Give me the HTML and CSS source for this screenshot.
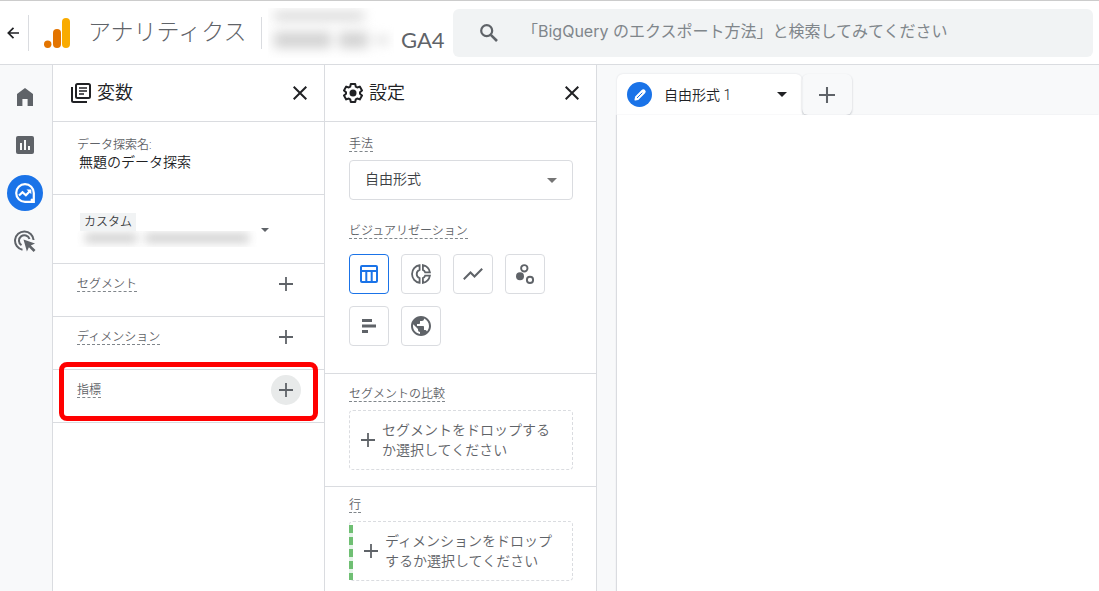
FILE: index.html
```html
<!DOCTYPE html>
<html lang="ja">
<head>
<meta charset="utf-8">
<meta name="viewport" content="width=device-width, initial-scale=1">
<title>アナリティクス</title>
<link rel="stylesheet" href="styles.css">
</head>
<body>
<svg class="defs" aria-hidden="true">
  <symbol id="plus" viewBox="0 0 14 14"><path d="M7 0v14M0 7h14" fill="none" stroke="currentColor" stroke-width="1.8"/></symbol>
  <symbol id="close" viewBox="0 0 14 14"><path d="M.7.7l12.6 12.6M13.3.7L.7 13.3" fill="none" stroke="currentColor" stroke-width="2"/></symbol>
  <symbol id="caret" viewBox="0 0 10 5"><path d="M0 0h10L5 5z" fill="currentColor"/></symbol>
</svg>
<header class="topbar">
  <button class="back" aria-label="戻る"><svg width="12" height="12" viewBox="0 0 12 12"><path d="M12 6H1.5M6.5 .8L1.3 6l5.2 5.2" fill="none" stroke="#202124" stroke-width="1.7"/></svg></button>
  <a class="brand" href="#">
    <svg width="26" height="30" viewBox="0 0 26 30"><circle cx="3.7" cy="26.2" r="3.7" fill="#e37400"/><rect x="9" y="11" width="8" height="19" rx="4" fill="#e37400"/><rect x="18" y="0" width="8" height="30" rx="4" fill="#f9ab00"/></svg>
    <span class="brand-name">アナリティクス</span>
  </a>
  <div class="property">
    <div class="redacted redacted-property" aria-hidden="true">
      <div class="smudge-row"><i class="smudge"></i></div>
      <div class="smudge-row tall"><i class="smudge wide"></i><i class="smudge"></i><i class="smudge dash"></i></div>
    </div>
    <span class="property-name">GA4</span>
  </div>
  <label class="search">
    <svg width="18" height="18" viewBox="0 0 18 18" fill="none" stroke="#5f6368"><circle cx="6.7" cy="6.7" r="5.5" stroke-width="2.2"/><path d="M10.8 10.8l6.2 6.2" stroke-width="2.6"/></svg>
    <input type="search" aria-label="検索" placeholder="「BigQuery のエクスポート方法」と検索してみてください">
  </label>
</header>
<div class="workspace">
  <nav class="rail">
    <a href="#" aria-label="ホーム"><svg width="16" height="18" viewBox="0 0 16 18"><path d="M8 0l8 6v12h-5.400v-7H5.400v7H0V6z" fill="#5f6368"/></svg></a>
    <a href="#" aria-label="レポート"><svg width="18" height="18" viewBox="0 0 18 18"><rect width="18" height="18" rx="2" fill="#5f6368"/><path d="M5 7v7M9 4v10M13 10v4" stroke="#f8f9fa" stroke-width="2"/></svg></a>
    <a href="#" class="current" aria-label="探索"><svg width="20" height="20" viewBox="0 0 20 20" fill="none" stroke="#fff"><path d="M10 1.200a8.800 8.800 0 1 0 0 17.600h8.800V10A8.800 8.800 0 0 0 10 1.200z" stroke-width="2.200"/><path d="M4 12.500l3.500-3.300 3.400 3L15 8" stroke-width="2.200"/><path d="M11.500 6.500h4.800v4.800z" fill="#fff" stroke="none"/><circle cx="17" cy="17" r="1.500" fill="#fff" stroke="none"/></svg></a>
    <a href="#" aria-label="広告"><svg width="22" height="22" viewBox="0 0 22 22" fill="none" stroke="#5f6368" stroke-width="2"><path d="M8.500 19.800A9.300 9.300 0 1 1 19.600 10"/><path d="M7.500 15.200a5.400 5.400 0 1 1 8-6.200"/><path d="M9.500 9.500l11.500 4-4.200 2 4.700 4.600-1.900 1.900-4.700-4.700-2 4.200z" fill="#5f6368" stroke="none"/></svg></a>
  </nav>
  <section class="panel" aria-labelledby="vars">
    <div class="panel-head">
      <svg width="20" height="20" viewBox="0 0 20 20" fill="none" stroke="#202124" stroke-width="2"><rect x="5" y="1" width="14" height="14" rx="1.500"/><path d="M1 4v13.500a1.500 1.500 0 0 0 1.500 1.500H16"/><path d="M8 5h8M8 8h8M8 11h5" stroke-width="1.700"/></svg>
      <h2 id="vars">変数</h2>
      <button class="icon-button" aria-label="変数を閉じる"><svg width="14" height="14"><use href="#close"/></svg></button>
    </div>
    <div class="block exploration">
      <label for="name">データ探索名:</label>
      <input id="name" type="text" value="無題のデータ探索">
    </div>
    <div class="block period">
      <button class="period-button" aria-label="カスタム期間">
        <span class="period-text"><span class="chip">カスタム</span>
          <span class="redacted redacted-date" aria-hidden="true"><i class="smudge"></i><i class="smudge wide"></i></span>
        </span>
        <svg width="8" height="4"><use href="#caret"/></svg>
      </button>
    </div>
    <div class="block item"><h3 class="term">セグメント</h3><button class="add" aria-label="セグメントを追加"><svg width="14" height="14"><use href="#plus"/></svg></button></div>
    <div class="block item"><h3 class="term">ディメンション</h3><button class="add" aria-label="ディメンションを追加"><svg width="14" height="14"><use href="#plus"/></svg></button></div>
    <div class="block item marked"><h3 class="term">指標</h3><button class="add hovered" aria-label="指標を追加"><svg width="14" height="14"><use href="#plus"/></svg></button></div>
  </section>
  <section class="panel" aria-labelledby="settings">
    <div class="panel-head">
      <svg width="20" height="20" viewBox="0 0 20 20"><path d="M7.800 1h4.400l.6 2.700 1.400.8 2.600-.9L19 7.400l-2 1.800v1.600l2 1.800-2.200 3.800-2.600-.9-1.400.8-.6 2.700H7.800l-.6-2.700-1.400-.8-2.600.9L1 12.600l2-1.800V9.200L1 7.400l2.200-3.800 2.600.9 1.400-.8z" fill="none" stroke="#202124" stroke-width="2" stroke-linejoin="round"/><circle cx="10" cy="10" r="3.500" fill="#202124"/></svg>
      <h2 id="settings">設定</h2>
      <button class="icon-button" aria-label="設定を閉じる"><svg width="14" height="14"><use href="#close"/></svg></button>
    </div>
    <div class="block setup">
      <label class="term" for="method">手法</label>
      <div class="select"><select id="method"><option>自由形式</option></select><svg width="10" height="5"><use href="#caret"/></svg></div>
      <h3 class="term">ビジュアリゼーション</h3>
      <div class="charts">
        <button class="chart selected" aria-label="表"><svg width="18" height="18" viewBox="0 0 18 18" fill="none" stroke="currentColor" stroke-width="2"><rect x="1" y="1" width="16" height="16" rx="1"/><path d="M1 6h16M6.300 6v11M11.700 6v11"/></svg></button>
        <button class="chart" aria-label="ドーナツ グラフ"><svg width="20" height="20" viewBox="0 0 20 20" fill="none" stroke="currentColor" stroke-width="1.800"><path d="M8.600 1.200a8.900 8.900 0 0 0 0 17.600v-4.600a4.500 4.500 0 0 1 0-8.400zM11.900 1.200v4.600q1.700.7 2.300 2.600h4.700a8.900 8.900 0 0 0-7-7.200zM11.900 18.800v-4.600q1.700-.7 2.300-2.600h4.700a8.900 8.900 0 0 1-7 7.200z"/></svg></button>
        <button class="chart" aria-label="折れ線グラフ"><svg width="20" height="12" viewBox="0 0 20 12" fill="none" stroke="currentColor" stroke-width="2"><path d="M.8 11.200l6.700-6.700 4 4L19.200.7"/></svg></button>
        <button class="chart" aria-label="散布図"><svg width="18" height="20" viewBox="0 0 18 20" fill="none" stroke="currentColor" stroke-width="1.900"><circle cx="8.300" cy="4.300" r="3.200"/><circle cx="4" cy="12.300" r="4" fill="currentColor" stroke="none"/><circle cx="14" cy="15.900" r="3.100"/></svg></button>
        <button class="chart" aria-label="棒グラフ"><svg width="14" height="14" viewBox="0 0 14 14"><path d="M0 1.500h10M0 7h14M0 12.500h6" stroke="currentColor" stroke-width="3"/></svg></button>
        <button class="chart" aria-label="地図"><svg width="24" height="24" viewBox="0 0 24 24"><path d="M12 2C6.480 2 2 6.480 2 12s4.480 10 10 10 10-4.480 10-10S17.520 2 12 2zm-1 17.930c-3.950-.49-7-3.850-7-7.930 0-.62.080-1.210.21-1.790L9 15v1c0 1.100.9 2 2 2v1.930zm6.900-2.540c-.26-.81-1-1.390-1.900-1.390h-1v-3c0-.55-.45-1-1-1H8v-2h2c.55 0 1-.45 1-1V7h2c1.100 0 2-.9 2-2v-.41c2.930 1.190 5 4.060 5 7.410 0 2.080-.8 3.970-2.100 5.390z" fill="currentColor"/></svg></button>
      </div>
    </div>
    <div class="block drop-block">
      <h3 class="term">セグメントの比較</h3>
      <button class="drop"><svg width="14" height="14"><use href="#plus"/></svg><span>セグメントをドロップするか選択してください</span></button>
    </div>
    <div class="block drop-block rows">
      <h3 class="term">行</h3>
      <button class="drop dimension"><svg width="14" height="14"><use href="#plus"/></svg><span>ディメンションをドロップするか選択してください</span></button>
    </div>
  </section>
  <main class="canvas">
    <div class="tabs">
      <button class="tab"><span class="pencil"><svg width="14" height="14" viewBox="0 0 14 14"><path d="M2.200 11.800l.5-2.800 6.500-6.500a1.600 1.600 0 0 1 2.300 2.300L5 11.300z" fill="#fff" stroke="#fff" stroke-width="1.400" stroke-linejoin="round"/><path d="M4 10l5.300-5.300" stroke="#1a73e8" stroke-width="1"/></svg></span><span class="tab-name">自由形式 1</span><svg width="10" height="5"><use href="#caret"/></svg></button>
      <button class="tab-add" aria-label="タブを追加"><svg width="16" height="16"><use href="#plus"/></svg></button>
    </div>
    <div class="sheet"></div>
  </main>
</div>
</body>
</html>
```
FILE: styles.css
```css
* { box-sizing: border-box; }
body {
  margin: 0;
  height: 100vh;
  display: flex;
  flex-direction: column;
  overflow: hidden;
  background: #fff;
  color: #202124;
  font: 350 14px/20px Roboto, "Noto Sans CJK JP", sans-serif;
}
.defs { position: absolute; width: 0; height: 0; }
button, input, select { font: inherit; color: inherit; border: 0; padding: 0; margin: 0; background: none; }
button { cursor: pointer; }
svg { display: block; flex: none; }
a { color: inherit; text-decoration: none; }
h2, h3 { margin: 0; font-weight: inherit; }

.topbar {
  display: flex;
  align-items: center;
  flex: none;
  height: 65px;
  padding-right: 6px;
  border-top: 1px solid #ccc;
  border-bottom: 1px solid #dadce0;
}
.back { display: flex; align-items: center; width: 29px; height: 36px; padding-left: 7px; border-right: 1px solid #dadce0; }
.brand { display: flex; align-items: center; gap: 18px; width: 233px; height: 32px; padding-left: 15px; border-right: 1px solid #dadce0; }
.brand-name { color: #5f6368; font-size: 23px; line-height: 32px; font-weight: 300; white-space: nowrap; }
.property { display: flex; align-items: center; width: 191px; padding-left: 6px; gap: 7px; }
.property-name { padding-top: 14px; color: #5f6368; font: 400 22px/24px Lato, sans-serif; }
.redacted { display: block; overflow: hidden; }
.redacted-property { width: 126px; height: 50px; padding: 4px 6px; }
.smudge-row { display: flex; gap: 8px; height: 8px; margin: 0 24px 12px 0; filter: blur(6px); }
.smudge-row.tall { height: 16px; margin-right: 0; }
.smudge { flex: 1; background: #d2d2d2; }
.smudge.wide { flex: 2; }
.smudge.dash { flex: none; width: 12px; align-self: center; height: 6px; }
.search { display: flex; align-items: center; flex: 1; gap: 24px; height: 48px; padding-left: 27px; border-radius: 6px; background: #f1f3f4; }
.search input { flex: 1; min-width: 0; height: 44px; padding-bottom: 3px; outline: 0; font: 400 16px/24px Inter, "Noto Sans CJK JP", sans-serif; }
.search input::placeholder { color: #80868b; opacity: 1; }

.workspace { display: flex; flex: 1; min-height: 0; }
.rail { display: flex; flex-direction: column; align-items: center; gap: 12px; flex: none; width: 53px; padding: 14px 2px 0 0; border-right: 1px solid #dadce0; background: #f8f9fa; }
.rail a { display: grid; place-items: center; width: 36px; height: 36px; border-radius: 50%; }
.rail .current { background: #1a73e8; }

.panel { flex: none; width: 272px; border-right: 1px solid #dadce0; }
.panel-head { display: flex; align-items: center; gap: 6px; height: 57px; padding: 0 10px 0 18px; border-bottom: 1px solid #dadce0; }
.panel-head h2 { flex: 1; font-size: 18px; line-height: 24px; }
.icon-button { display: grid; place-items: center; width: 28px; height: 28px; }
.block { border-bottom: 1px solid #dadce0; }
.term { display: block; width: fit-content; padding-top: 2px; color: #5f6368; font-size: 12px; line-height: 14px; border-bottom: 1px dashed #80868b; }
.exploration { display: flex; flex-direction: column; height: 73px; padding: 16px 24px 0; }
.exploration label { color: #5f6368; font-size: 12px; line-height: 14px; }
.exploration input { height: 20px; padding-left: 2px; }
.period { height: 69px; padding: 18px 24px 0; }
.period-button { display: flex; align-items: center; gap: 4px; }
.period-text { display: block; width: 180px; text-align: left; }
.chip { display: block; width: fit-content; margin-left: 3px; padding: 0 4px; background: #f1f3f4; color: #3c4043; font-size: 12px; line-height: 18px; }
.redacted-date { display: flex; gap: 8px; height: 16px; padding: 2px 8px 4px; }
.redacted-date .smudge { filter: blur(5px); background: #d2d2d2; }
.period-button > svg, .add, .drop { color: #5f6368; }
.item { display: flex; align-items: flex-start; justify-content: space-between; height: 53px; padding: 5px 23px 0 24px; }
.item .term { margin-top: 6px; }
.add { display: grid; place-items: center; width: 30px; height: 30px; border-radius: 50%; }
.hovered { background: #e8eaea; }
.marked { position: relative; }
.marked::after { content: ""; position: absolute; inset: -8px 6px 1px; border: 5px solid #f00; border-radius: 8px; pointer-events: none; }

.setup { height: 252px; padding: 13px 23px 0 24px; }
.select { position: relative; margin: 8px 0 22px; }
.select select { display: block; width: 100%; height: 40px; padding: 0 16px 2px 15px; border: 1px solid #dadce0; border-radius: 4px; background: #fff; appearance: none; color: #3c4043; }
.select svg { position: absolute; right: 16px; top: 18px; color: #757575; pointer-events: none; }
.charts { display: flex; flex-wrap: wrap; gap: 12px; margin-top: 15px; }
.chart { display: grid; place-items: center; width: 40px; height: 40px; border: 1px solid #dadce0; border-radius: 4px; color: #5f6368; }
.chart.selected { border-color: #1a73e8; color: #1a73e8; }
.drop-block { height: 113px; padding: 11px 23px 0 24px; }
.drop-block.rows { padding-top: 9px; }
.drop { position: relative; display: flex; align-items: center; gap: 7px; width: 100%; height: 60px; margin-top: 8px; padding: 0 16px 0 11px; border: 1px dashed #dadce0; border-radius: 4px; text-align: left; }
.drop.dimension { padding-left: 14px; }
.dimension::before { content: ""; position: absolute; left: -1px; top: 3px; bottom: 0; width: 4px; background: repeating-linear-gradient(#6fbf73 0 8px, #e6f4ea 8px 12px); }

.canvas { display: flex; flex-direction: column; flex: 1; min-width: 0; padding: 9px 0 0 20px; background: #f8f9fa; }
.tabs { display: flex; }
.tab { display: flex; align-items: center; width: 185px; height: 41px; padding: 0 15px 0 10px; border-radius: 6px 6px 0 0; background: #fff; box-shadow: 0 0 2px #dadce0; text-align: left; }
.tab-name { flex: 1; padding-left: 12px; }
.pencil { display: grid; place-items: center; width: 25px; height: 25px; border-radius: 50%; background: #1a73e8; }
.tab-add { display: grid; place-items: center; width: 50px; height: 41px; border-radius: 6px; color: #5f6368; box-shadow: 0 1px 2px #bdc1c6; }
.sheet { position: relative; flex: 1; background: #fff; box-shadow: -1px 0 1px #dadce0; }
```
